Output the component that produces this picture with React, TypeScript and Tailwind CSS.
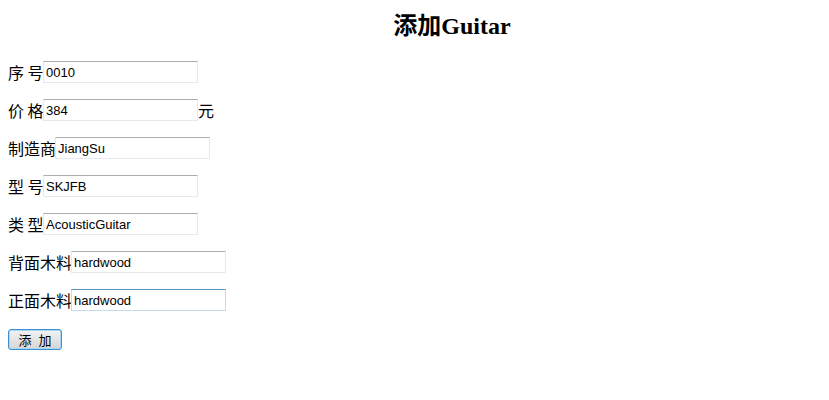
import React from "react";

const rows: { label: string; w: string; value: string; suffix?: string; focus?: boolean }[] = [
  { label: "序 号", w: "w-[35px]", value: "0010" },
  { label: "价 格", w: "w-[35px]", value: "384", suffix: "元" },
  { label: "制造商", w: "w-[47px]", value: "JiangSu" },
  { label: "型 号", w: "w-[35px]", value: "SKJFB" },
  { label: "类 型", w: "w-[35px]", value: "AcousticGuitar" },
  { label: "背面木料", w: "w-[63px]", value: "hardwood" },
  { label: "正面木料", w: "w-[63px]", value: "hardwood", focus: true },
];

export default function App() {
  return (
    <div className="w-[829px] h-[400px] bg-white text-black pl-[8px] pt-[12px] [font-family:'Noto_Sans_CJK_SC',sans-serif]">
      <h2 className="h-[28px] leading-[28px] text-center pl-[67px] text-[24px] font-bold [font-family:'Liberation_Serif','Noto_Sans_CJK_SC',serif]">
        添加Guitar
      </h2>
      <div className="mt-[21px] flex flex-col gap-[16px]">
        {rows.map((r) => (
          <div key={r.label} className="flex items-center h-[22px] text-[16px] leading-[22px]">
            <span className={`${r.w} whitespace-pre`}>{r.label}</span>
            <input
              readOnly
              value={r.value}
              className={
                r.focus
                  ? "w-[155px] h-[22px] border border-[#c5daed] border-t-[#5794bf] pl-[2px] pt-[1px] text-[13px] [font-family:'Liberation_Sans',Arial,sans-serif] outline-none"
                  : "w-[155px] h-[22px] border border-[#e3e9ef] border-t-[#abadb3] pl-[2px] pt-[1px] text-[13px] [font-family:'Liberation_Sans',Arial,sans-serif] outline-none"
              }
            />
            {r.suffix && <span>{r.suffix}</span>}
          </div>
        ))}
      </div>
      <button className="mt-[18px] w-[54px] h-[21px] rounded-[3px] border border-[#3c8fd0] bg-gradient-to-b from-[#f2f2f2] to-[#d6d6d6] text-[13px] leading-[19px] text-black [font-family:'Noto_Sans_CJK_SC',sans-serif] shadow-[inset_0_0_0_1px_#a8d8f5] flex items-center justify-center gap-[7px]">
        <span>添</span>
        <span>加</span>
      </button>
    </div>
  );
}
